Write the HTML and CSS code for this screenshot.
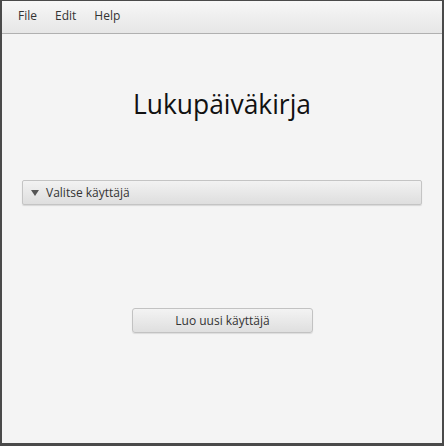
FILE: index.html
```html
<!DOCTYPE html>
<html>
<head>
<meta charset="utf-8">
<link rel="stylesheet" href="styles.css">
</head>
<body>
<div class="window">
  <div class="menubar">
    <span class="menu">File</span>
    <span class="menu">Edit</span>
    <span class="menu">Help</span>
  </div>
  <div class="content">
    <h1 class="title">Lukupäiväkirja</h1>
    <div class="titled">
      <svg class="arrow" width="8" height="6" viewBox="0 0 8 6"><polygon points="0,0 8,0 4,6" fill="#555"/></svg>
      <span>Valitse käyttäjä</span>
    </div>
    <div class="btnrow">
      <div class="button">Luo uusi käyttäjä</div>
    </div>
  </div>
</div>
</body>
</html>
```
FILE: styles.css
```css
html, body {
  margin: 0;
  padding: 0;
  width: 444px;
  height: 446px;
  overflow: hidden;
}
.window {
  box-sizing: border-box;
  width: 444px;
  height: 446px;
  border-style: solid;
  border-color: #4a4a4a;
  border-width: 1px 2px 3px 2px;
  background: #f4f4f4;
  font-family: "Open Sans", "Noto Sans", sans-serif;
  color: #333;
  display: flex;
  flex-direction: column;
}
.menubar {
  height: 33px;
  box-sizing: border-box;
  border-bottom: 1px solid #b0b0b0;
  background: linear-gradient(#f7f7f7, #e6e6e6);
  display: flex;
  align-items: center;
  padding-left: 16px;
  gap: 18px;
  font-size: 12px;
  padding-bottom: 3px;
}
.menu { color: #333; }
.content {
  flex: 1;
  display: flex;
  flex-direction: column;
}
.title {
  margin: 52px 0 0 0;
  text-align: center;
  font-weight: normal;
  font-size: 26.4px;
  line-height: 36px;
  color: #111;
  height: 36px;
}
.titled {
  margin: 58px 20px 0 20px;
  height: 25px;
  box-sizing: border-box;
  border: 1px solid #c4c4c4;
  border-radius: 2px;
  background: linear-gradient(#f2f2f2, #dedede);
  box-shadow: 0 1px 1px rgba(0,0,0,0.12);
  display: flex;
  align-items: center;
  padding-left: 8px;
  font-size: 12px;
  color: #333;
}
.arrow { margin-right: 7px; }
.btnrow {
  margin-top: 103px;
  display: flex;
  justify-content: center;
  padding-left: 1px;
}
.button {
  width: 181px;
  height: 25px;
  box-sizing: border-box;
  border: 1px solid #c2c2c2;
  border-radius: 3px;
  background: linear-gradient(#f3f3f3, #dfdfdf);
  box-shadow: 0 1px 1px rgba(0,0,0,0.1);
  font-size: 12px;
  color: #333;
  display: flex;
  align-items: center;
  justify-content: center;
}
```
